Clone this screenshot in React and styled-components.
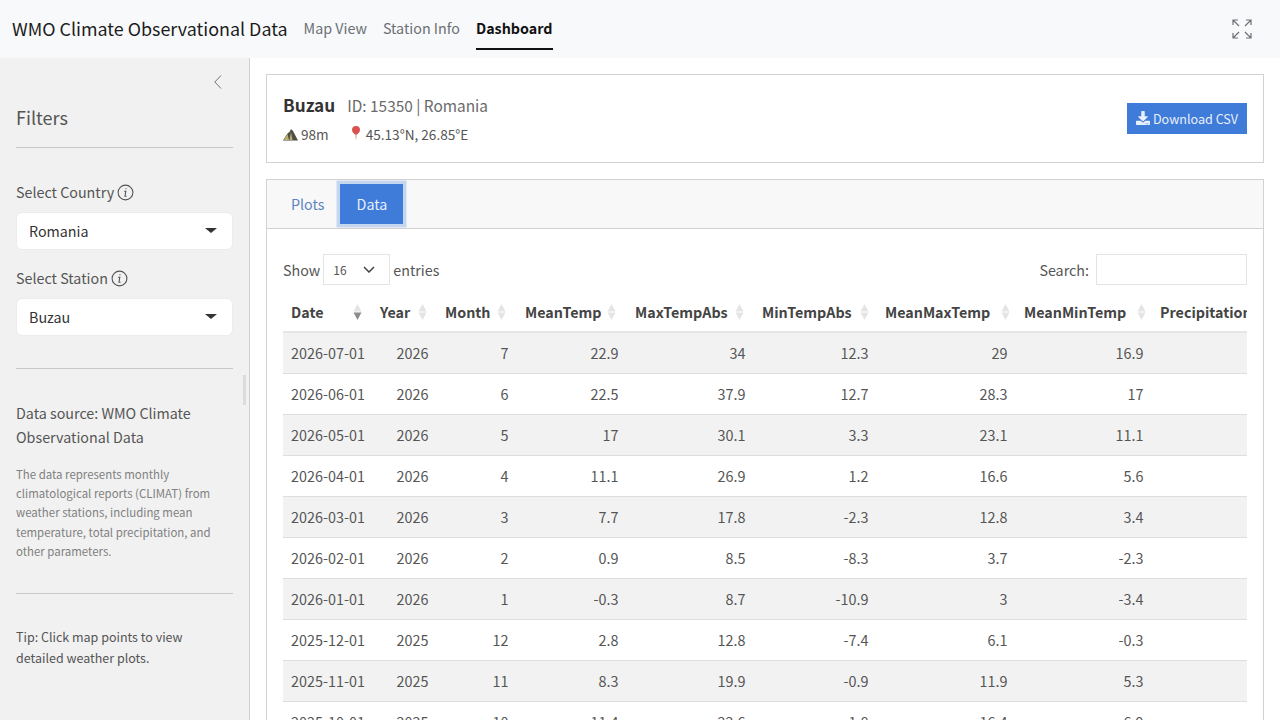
import React from "react";
import styled, { createGlobalStyle } from "styled-components";
import { FaDownload } from "react-icons/fa";

const Global = createGlobalStyle`
  html, body { margin: 0; padding: 0; height: 720px; overflow: hidden; background: #fff; }
  * { box-sizing: border-box; }
  body { font-family: "Noto Sans CJK SC", "Open Sans", sans-serif; color: #333; font-size: 14.3px; }
`;

const Page = styled.div`
  width: 1280px; height: 720px; display: flex; flex-direction: column; overflow: hidden;
`;
const Navbar = styled.header`
  height: 58px; flex: none; background: #f8f9fb; display: flex; align-items: stretch; padding-left: 12px;
`;
const Brand = styled.div`
  font-size: 17.9px; color: #1c1c1c; line-height: 57px; margin-right: 16px; white-space: nowrap;
`;
const NavLink = styled.a`
  font-size: 14.3px; height: 50px; margin-right: 16px; line-height: 56px; display: block;
  color: ${(p) => (p.$active ? "#111" : "#6b6f73")};
  font-weight: ${(p) => (p.$active ? 700 : 400)};
  border-bottom: ${(p) => (p.$active ? "2px solid #111" : "none")};
`;
const NavSpacer = styled.div`flex: 1;`;
const FullBtn = styled.div`
  width: 20px; margin-right: 28px; display: flex; align-items: center; color: #6c7177;
`;
const Body = styled.div`flex: 1; display: flex; min-height: 0;`;
const Sidebar = styled.aside`
  position: relative; width: 250px; flex: none; background: #f1f1f1; border-right: 1px solid #cfcfcf; padding: 0 16px;
  color: #555;
`;
const Collapse = styled.div`
  display: flex; justify-content: flex-end; padding: 17px 11px 0 0; height: 47px; color: #6c7177;
`;
const SideTitle = styled.h2`
  margin: 0; font-size: 18px; font-weight: 400; line-height: 24px; padding-bottom: 18px; color: #555; border-bottom: 1px solid #c9c9c9;
`;
const FieldLabel = styled.div`
  display: flex; align-items: center; gap: 3px; font-size: 14.3px; line-height: 20px; color: #555;
  margin-top: ${(p) => p.$top}px; margin-bottom: 10px;
`;
const Select = styled.div`
  height: 38px; background: #fff; border-radius: 6px; border: 1px solid #ececec; padding: 0 12px 2px;
  display: flex; align-items: center; justify-content: space-between; font-size: 14.3px; color: #333;
`;
const Caret = styled.span`
  width: 0; height: 0; border-left: 6px solid transparent; border-right: 6px solid transparent; border-top: 5px solid #333; margin-right: 3px;
`;
const SideRule = styled.hr`
  margin: ${(p) => p.$m}; border: 0; border-top: 1px solid #c9c9c9;
`;
const SourceText = styled.p`
  margin: 0; font-size: 14.3px; line-height: 24px; color: #555;
`;
const Small = styled.p`
  margin: 16px 0 0; font-size: 11.45px; line-height: 19.2px; color: #808080;
`;
const Tip = styled.p`
  margin: 0; font-size: 12.5px; line-height: 21px; color: #555;
`;
const Handle = styled.div`
  position: absolute; right: 3px; top: 317px; width: 3px; height: 30px; background: #dcdcdc;
`;
const Main = styled.main`
  flex: 1; min-width: 0; padding: 16px 16px 0; display: flex; flex-direction: column; gap: 16px; overflow: hidden;
`;
const StationCard = styled.section`
  height: 89px; flex: none; border: 1px solid #d2d2d2; padding: 0 16px; display: flex; align-items: center; justify-content: space-between;
`;
const StationInfo = styled.div`display: flex; flex-direction: column; gap: 7px; padding-bottom: 1px;`;
const TitleRow = styled.div`display: flex; align-items: baseline; gap: 12px;`;
const StationName = styled.span`font-size: 17.2px; font-weight: 700; color: #333;`;
const StationId = styled.span`font-size: 15.4px; color: #6a6a6a;`;
const MetaRow = styled.div`display: flex; align-items: center; gap: 20px; font-size: 13.6px; color: #555;`;
const Meta = styled.span`display: flex; align-items: center; gap: 3px;`;
const DownloadBtn = styled.button`
  width: 120px; height: 31px; background: #3f7bd9; border: 0; color: #e8f0fb; font: inherit; font-size: 12.6px;
  display: flex; align-items: center; justify-content: center; gap: 3px; padding: 0 0 1px;
`;
const TabCard = styled.section`
  flex: 1; border: 1px solid #d2d2d2; border-bottom: 0; min-height: 0; overflow: hidden;
`;
const TabBar = styled.div`
  height: 49px; background: #f8f8f8; border-bottom: 1px solid #d2d2d2; display: flex; align-items: flex-start; padding-left: 8px;
`;
const Tab = styled.div`
  font-size: 14.3px; height: 48px; padding: 0 16px 2px; display: flex; align-items: center;
  color: #5b84c4;
`;
const ActiveTab = styled.div`
  font-size: 14.3px; width: 63px; height: 40px; margin-top: 4px; padding-bottom: 2px; background: #3f7bd9; color: #e8f0fb;
  display: flex; align-items: center; justify-content: center;
  box-shadow: 0 0 0 3.5px #c5d7ef;
`;
const TabBody = styled.div`padding: 24px 16px 0;`;
const Controls = styled.div`
  display: flex; justify-content: space-between; align-items: center; height: 32px; font-size: 14.3px; color: #555;
`;
const ShowGroup = styled.div`display: flex; align-items: center; gap: 3px;`;
const Entries = styled.div`
  width: 67px; height: 31px; border: 1px solid #e4e4e4; display: flex; align-items: center; justify-content: space-between; padding: 0 14px 0 9px; font-size: 12px; color: #555;
`;
const SearchGroup = styled.div`display: flex; align-items: center; gap: 7px;`;
const SearchBox = styled.div`width: 151px; height: 31px; border: 1px solid #e4e4e4;`;
const TableWrap = styled.div`width: 964px; overflow: hidden; margin-top: 6px;`;
const Table = styled.table`
  border-collapse: collapse; table-layout: fixed; width: 1000px; font-size: 14.4px; color: #555;
`;
const Th = styled.th`
  position: relative; height: 41px; padding: 0 8px; text-align: left; font-weight: 700; font-size: 14.3px; color: #444; white-space: nowrap; overflow: visible;
  border-bottom: 2px solid #e6e6e6;
`;
const Sort = styled.span`
  position: absolute; right: ${(p) => p.$r}px; top: 12px; width: 9px; height: 16px; display: block;
`;
const Tr = styled.tr`background: ${(p) => (p.$odd ? "#f2f2f2" : "#fff")};`;
const Td = styled.td`
  height: 41px; padding: 0 8.5px 0 8px; border-bottom: 1px solid #dedede; white-space: nowrap;
  text-align: ${(p) => (p.$left ? "left" : "right")};
`;

const Info = () => (
  <svg width="17" height="17" viewBox="0 0 17 17" fill="none" stroke="#555" strokeWidth="1.1">
    <circle cx="8.5" cy="8.5" r="7.4" />
    <path d="M9 4.300v1M7.300 7.400h1.500l-.8 4.800h1.600" />
  </svg>
);
const SortIcon = ({ r, desc }) => (
  <Sort $r={r}>
    <svg width="9" height="16" viewBox="0 0 9 16">
      <path d="M4.500 0 8.500 7.500H.5z" fill="#e4e4e4" />
      <path d="M.5 8.500h8L4.500 16z" fill={desc ? "#8c8c8c" : "#e4e4e4"} />
    </svg>
  </Sort>
);

const cols = [
  ["Date", 89, 10, true], ["Year", 65, 10], ["Month", 80, 11], ["MeanTemp", 110, 11],
  ["MaxTempAbs", 127, 10], ["MinTempAbs", 123, 8], ["MeanMaxTemp", 139, 6], ["MeanMinTemp", 136, 6], ["Precipitation", 131, 6],
];
const rows = [
  ["2026-07-01", 2026, 7, 22.9, 34, 12.3, 29, 16.9],
  ["2026-06-01", 2026, 6, 22.5, 37.9, 12.7, 28.3, 17],
  ["2026-05-01", 2026, 5, 17, 30.1, 3.3, 23.1, 11.1],
  ["2026-04-01", 2026, 4, 11.1, 26.9, 1.2, 16.6, 5.6],
  ["2026-03-01", 2026, 3, 7.7, 17.8, -2.3, 12.8, 3.4],
  ["2026-02-01", 2026, 2, 0.9, 8.5, -8.3, 3.7, -2.3],
  ["2026-01-01", 2026, 1, -0.3, 8.7, -10.9, 3, -3.4],
  ["2025-12-01", 2025, 12, 2.8, 12.8, -7.4, 6.1, -0.3],
  ["2025-11-01", 2025, 11, 8.3, 19.9, -0.9, 11.9, 5.3],
  ["2025-10-01", 2025, 10, 11.4, 22.6, -1.8, 16.4, 6.9],
];

export default function App() {
  return (
    <Page>
      <Global />
      <Navbar>
        <Brand>WMO Climate Observational Data</Brand>
        <NavLink>Map View</NavLink>
        <NavLink>Station Info</NavLink>
        <NavLink $active>Dashboard</NavLink>
        <NavSpacer />
        <FullBtn>
          <svg width="20" height="20" viewBox="0 0 20 20" fill="none" stroke="currentColor" strokeWidth="1.2">
            <path d="M1 6V1h5M1 1l6 6M14 1h5v5M19 1l-6 6M1 14v5h5M1 19l6-6M19 14v5h-5M19 19l-6-6" />
          </svg>
        </FullBtn>
      </Navbar>
      <Body>
        <Sidebar>
          <Collapse>
            <svg width="8" height="14" viewBox="0 0 8 14" fill="none" stroke="currentColor" strokeWidth="1"><path d="M7 .5.8 7 7 13.500" /></svg>
          </Collapse>
          <SideTitle>Filters</SideTitle>
          <FieldLabel $top={34}>Select Country <Info /></FieldLabel>
          <Select>Romania<Caret /></Select>
          <FieldLabel $top={18}>Select Station <Info /></FieldLabel>
          <Select>Buzau<Caret /></Select>
          <SideRule $m="32px 0 32px" />
          <SourceText>Data source: WMO Climate Observational Data</SourceText>
          <Small>The data represents monthly climatological reports (CLIMAT) from weather stations, including mean temperature, total precipitation, and other parameters.</Small>
          <SideRule $m="32px 0 32px" />
          <Tip>Tip: Click map points to view detailed weather plots.</Tip>
          <Handle />
        </Sidebar>
        <Main>
          <StationCard>
            <StationInfo>
              <TitleRow><StationName>Buzau</StationName><StationId>ID: 15350 | Romania</StationId></TitleRow>
              <MetaRow>
                <Meta>
                  <svg width="15" height="13" viewBox="0 0 15 13">
                    <path d="M0 12.500 3.500 7 5 5l1.500-1L8 1l2 2 5 9.500z" fill="#4f4e42" />
                    <path d="M.8 12 4.500 6l1.500 6zM6.500 12l1.500-8 1.500 8z" fill="#b9ad70" />
                  </svg>
                  98m
                </Meta>
                <Meta>
                  <svg width="14" height="16" viewBox="0 0 14 16">
                    <path d="M7 0a4 4 0 0 1 4 4c0 2-2 3.500-3 4.500H6C5 7.500 3 6 3 4a4 4 0 0 1 4-4z" fill="#d8534f" />
                    <path d="M6.400 8h1.200l-.6 7z" fill="#a98a80" />
                  </svg>
                  45.13°N, 26.85°E
                </Meta>
              </MetaRow>
            </StationInfo>
            <DownloadBtn>
              <FaDownload size={14} />
              Download CSV
            </DownloadBtn>
          </StationCard>
          <TabCard>
            <TabBar>
              <Tab>Plots</Tab>
              <ActiveTab>Data</ActiveTab>
            </TabBar>
            <TabBody>
              <Controls>
                <ShowGroup>Show <Entries>16
                  <svg width="12" height="7" viewBox="0 0 12 7" fill="none" stroke="#444" strokeWidth="1.500"><path d="M1 1l5 5 5-5" /></svg>
                </Entries> entries</ShowGroup>
                <SearchGroup>Search: <SearchBox /></SearchGroup>
              </Controls>
              <TableWrap>
                <Table>
                  <colgroup>{cols.map((c) => <col key={c[0]} style={{ width: c[1] }} />)}</colgroup>
                  <thead>
                    <tr>{cols.map((c) => <Th key={c[0]}>{c[0]}<SortIcon r={c[2]} desc={c[3]} /></Th>)}</tr>
                  </thead>
                  <tbody>
                    {rows.map((r, i) => (
                      <Tr key={r[0]} $odd={i % 2 === 0}>
                        {r.map((v, j) => <Td key={j} $left={j === 0}>{v}</Td>)}
                        <Td />
                      </Tr>
                    ))}
                  </tbody>
                </Table>
              </TableWrap>
            </TabBody>
          </TabCard>
        </Main>
      </Body>
    </Page>
  );
}
